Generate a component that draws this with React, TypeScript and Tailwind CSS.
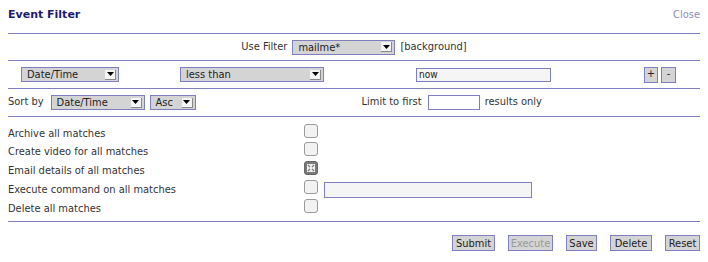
import React from 'react';

const font = { fontFamily: '"DejaVu Sans Condensed", "DejaVu Sans", Verdana, sans-serif', fontStretch: 'condensed' };

function FakeSelect({ value, width }: { value: string; width: string }) {
  return (
    <div className={`${width} h-[15px] flex items-center justify-between border border-[#7f7fbf] bg-[#d4d4d4] pl-[5px] pr-[2px]`}>
      <span className="text-[11px] leading-none text-[#222]">{value}</span>
      <span className="w-[11px] h-[10px] flex items-center justify-center bg-[#f4f4f4] border-r border-b border-[#888]">
        <svg width="7" height="4" viewBox="0 0 7 4">
          <path d="M0 0h7L3.5 4z" fill="#000" />
        </svg>
      </span>
    </div>
  );
}

function Checkbox({ checked }: { checked?: boolean }) {
  if (checked) {
    return (
      <span className="w-[14px] h-[14px] rounded-[3px] border border-[#666] bg-[#7a7a7a] flex items-center justify-center">
        <svg width="8" height="8" viewBox="0 0 8 8">
          <rect width="8" height="8" fill="#eee" />
          <path d="M1 1l2 2M7 1L5 3M1 7l2-2M7 7L5 5" stroke="#7a7a7a" strokeWidth="1.2" />
        </svg>
      </span>
    );
  }
  return <span className="w-[14px] h-[14px] rounded-[3px] border border-[#9a9a9a] bg-[#f2f2f2]" />;
}

function Btn({ label, width, disabled }: { label: string; width: string; disabled?: boolean }) {
  return (
    <button
      className={`${width} h-[16px] border border-[#7f7fbf] bg-[#d4d4d4] text-[11px] leading-none ${disabled ? 'text-[#999]' : 'text-[#222]'}`}
      style={font}
    >
      {label}
    </button>
  );
}

const actions = [
  { label: 'Archive all matches', h: 'h-[18px]' },
  { label: 'Create video for all matches', h: 'h-[19px]' },
  { label: 'Email details of all matches', h: 'h-[18px]', checked: true },
  { label: 'Execute command on all matches', h: 'h-[20px]', input: true },
  { label: 'Delete all matches', h: 'h-[19px]' },
];

export default function App() {
  return (
    <div className="w-[708px] h-[262px] bg-white text-[11px] text-[#333]" style={font}>
      <div className="mx-2 h-[34px] flex items-start justify-between pt-[7px] border-b border-[#7f7fbf]">
        <span className="text-[11px] font-bold text-[#1c1c6c] font-['DejaVu_Sans',Verdana,sans-serif] [font-stretch:normal]">
          Event Filter
        </span>
        <span className="text-[11px] text-[#8c8cb8]">Close</span>
      </div>

      <div className="mx-2 h-[27px] flex items-center justify-center gap-[4px] border-b border-[#7f7fbf]">
        <span className="mr-[1px]">Use Filter</span>
        <FakeSelect value="mailme*" width="w-[103px]" />
        <span className="ml-[1px]">[background]</span>
      </div>

      <div className="mx-2 h-[28px] flex items-center border-b border-[#7f7fbf]">
        <div className="ml-[13px]">
          <FakeSelect value="Date/Time" width="w-[98px]" />
        </div>
        <div className="ml-[61px]">
          <FakeSelect value="less than" width="w-[144px]" />
        </div>
        <div className="ml-[92px] w-[135px] h-[14px] border border-[#7f7fbf] bg-[#f5f5f5] flex items-center pl-[2px] text-[10px] leading-none text-[#222]">
          now
        </div>
        <div className="ml-auto mr-[24px] flex gap-[3px]">
          <span className="w-[14px] h-[16px] border border-[#7f7fbf] bg-[#d4d4d4] flex items-center justify-center text-[#222]">+</span>
          <span className="w-[15px] h-[16px] border border-[#7f7fbf] bg-[#d4d4d4] flex items-center justify-center text-[#222]">-</span>
        </div>
      </div>

      <div className="mx-2 h-[28px] flex items-center border-b border-[#7f7fbf]">
        <span>Sort by</span>
        <div className="ml-[7px]">
          <FakeSelect value="Date/Time" width="w-[94px]" />
        </div>
        <div className="ml-[5px]">
          <FakeSelect value="Asc" width="w-[46px]" />
        </div>
        <span className="ml-[166px]">Limit to first</span>
        <span className="ml-[6px] w-[52px] h-[15px] border border-[#7f7fbf] bg-white" />
        <span className="ml-[5px]">results only</span>
      </div>

      <div className="mx-2 pt-[8px] h-[105px] flex flex-col border-b border-[#7f7fbf]">
        {actions.map((a) => (
          <div key={a.label} className={`${a.h} flex items-center`}>
            <span className="w-[296px]">{a.label}</span>
            <span className="-mt-[7px] flex">
              <Checkbox checked={a.checked} />
            </span>
            {a.input && (
              <span className="ml-[6px] w-[208px] h-[16px] border border-[#7f7fbf] bg-[#f5f5f5]" />
            )}
          </div>
        ))}
      </div>

      <div className="mx-2 mt-[13px] flex justify-end gap-[13px]">
        <Btn label="Submit" width="w-[43px]" />
        <Btn label="Execute" width="w-[45px]" disabled />
        <Btn label="Save" width="w-[31px]" />
        <Btn label="Delete" width="w-[42px]" />
        <Btn label="Reset" width="w-[35px]" />
      </div>
    </div>
  );
}
